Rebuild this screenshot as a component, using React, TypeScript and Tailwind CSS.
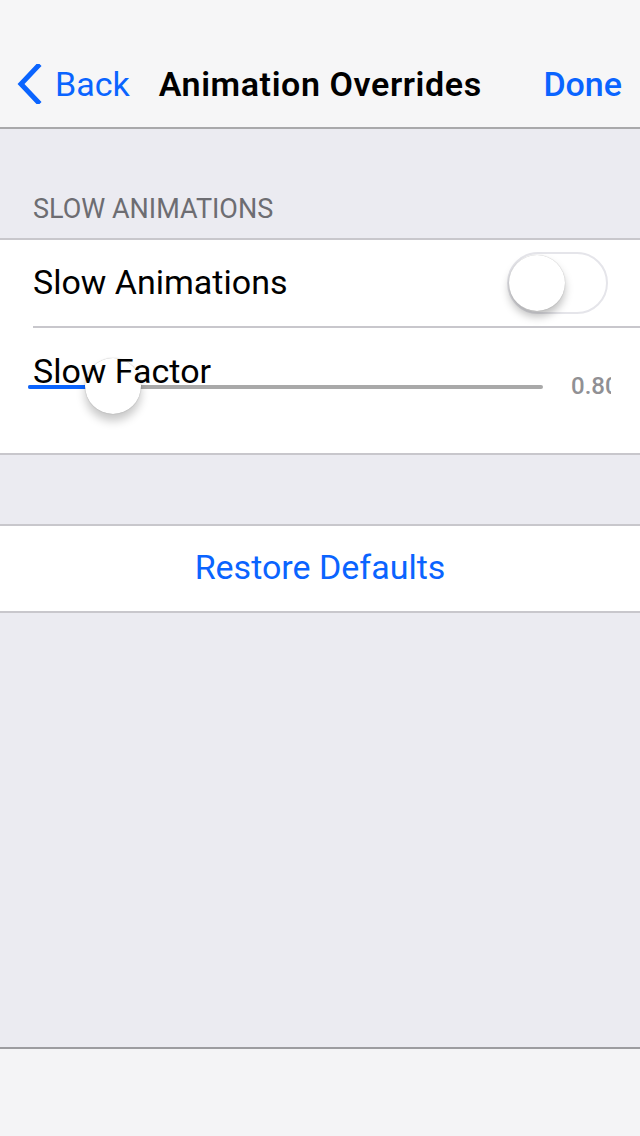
export default function App() {
  return (
    <div className="flex h-[1136px] w-[640px] flex-col bg-[#ebebf1] font-['Roboto',sans-serif] text-black">
      {/* nav bar */}
      <div className="flex h-[129px] items-end border-b-2 border-[#a9a9ab] bg-[#f6f6f7] pb-[23px]">
        <div className="flex w-full items-center pl-[16px] pr-[18px]">
          <svg width="26" height="40" viewBox="0 0 26 40" className="mr-[13px]">
            <path d="M22 2 L5 20 L22 38" fill="none" stroke="#0a64ff" strokeWidth="5" strokeLinecap="square" />
          </svg>
          <span className="text-[34px] leading-none text-[#0a64ff]">Back</span>
          <span className="ml-[29px] text-[34px] font-semibold leading-none tracking-[0.6px]">Animation Overrides</span>
          <span className="ml-auto text-[34px] font-medium leading-none text-[#0a64ff]">Done</span>
        </div>
      </div>

      {/* section header */}
      <div className="h-[109px] px-[33px] pt-[67px] text-[27px] leading-none text-[#6d6d72]">SLOW ANIMATIONS</div>

      {/* group */}
      <div className="border-y-2 border-[#c8c7cc] bg-white">
        <div className="flex h-[86px] items-center justify-between pl-[33px] pr-[32px]">
          <span className="mb-[1px] text-[34px]">Slow Animations</span>
          <div className="relative h-[62px] w-[101px] rounded-full border-2 border-[#e5e5ea] bg-white">
            <div className="absolute left-0 top-[1px] h-[56px] w-[56px] rounded-full bg-white shadow-[0_6px_8px_rgba(0,0,0,0.25),0_0_1px_rgba(0,0,0,0.3)]" />
          </div>
        </div>
        <div className="ml-[33px] h-[2px] bg-[#c8c7cc]" />
        <div className="relative flex h-[125px] items-start pl-[28px] pr-[24px] pt-[56px]">
          <div className="relative mt-[1px] h-[4px] w-[515px] rounded-full bg-[#a9a9a9]">
            <div className="absolute left-0 top-0 h-[4px] w-[58px] rounded-l-full bg-[#0a64ff]" />
            <div className="absolute left-[57px] top-[-27px] h-[56px] w-[56px] rounded-full bg-white shadow-[0_7px_10px_rgba(0,0,0,0.22),0_0_1px_rgba(0,0,0,0.35)]" />
          </div>
          <div className="ml-[28px] mt-[-16px] w-[45px] overflow-hidden whitespace-nowrap text-[24px] font-medium text-[#909094]">0.8<span className="inline-block w-[6px] overflow-hidden align-top">0</span></div>
          <span className="absolute left-[33px] top-[26px] text-[34px] leading-none">Slow Factor</span>
        </div>
      </div>

      {/* restore */}
      <div className="mt-[69px] flex h-[89px] items-center justify-center border-y-2 border-[#c8c7cc] bg-white">
        <span className="mb-[2px] text-[34px] text-[#0a64ff]">Restore Defaults</span>
      </div>

      <div className="flex-1" />

      {/* toolbar */}
      <div className="h-[89px] border-t-2 border-[#9c9ca0] bg-[#f4f4f6]" />
    </div>
  );
}
